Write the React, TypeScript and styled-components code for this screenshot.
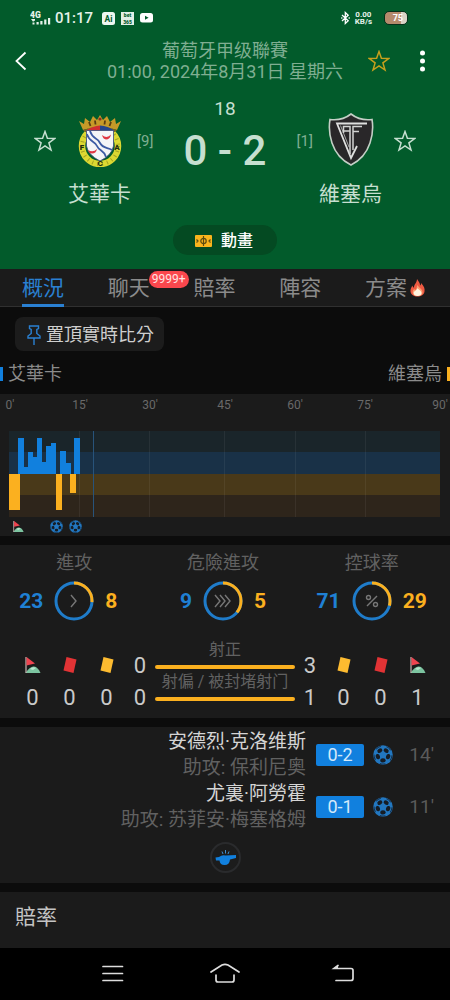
import React from "react";
import styled, { createGlobalStyle } from "styled-components";

const c = {
  green: "#025b2b",
  panel: "#1b1b1b",
  page: "#0c0c0c",
  blue: "#1180de",
  amber: "#fbb01f",
  pale: "#c6dfd0",
  muted: "#7fae91",
  grey: "#616161",
};

const Global = createGlobalStyle`
  *, *::before, *::after { box-sizing: border-box; }
  body {
    margin: 0;
    background: ${c.page};
    font-family: Roboto, "Noto Sans CJK TC", sans-serif;
  }
  button { border: 0; padding: 0; margin: 0; background: none; color: inherit; font: inherit; cursor: pointer; }
  svg { display: block; flex: none; }
  h1, h2, p { margin: 0; font-weight: 400; }
`;

const Page = styled.div`
  min-height: 100vh;
  display: flex;
  flex-direction: column;
`;

/* ---------- header ---------- */
const Hero = styled.header`
  background: ${c.green};
  padding-bottom: 14px;
`;
const StatusBar = styled.div`
  display: flex;
  align-items: center;
  justify-content: space-between;
  height: 34px;
  padding: 2px 42px 0 30px;
  color: #e6f2ea;
`;
const StatusGroup = styled.div<{ $gap: number }>`
  display: flex;
  align-items: center;
  gap: ${(p) => p.$gap}px;
`;
const Clock = styled.span`
  font-size: 15px;
  line-height: 18px;
  font-weight: 500;
  margin-right: 3px;
`;
const Speed = styled.span`
  font-size: 8px;
  line-height: 7px;
  font-weight: 700;
  text-align: center;
  margin-right: 7px;
`;
const Battery = styled.span`
  width: 24px;
  height: 14px;
  border: 1px solid #06301a;
  border-radius: 5px;
  background: linear-gradient(90deg, #b58a6c 0 70%, #d9d3c6 75%);
  color: #fff;
  font-size: 9px;
  line-height: 12px;
  font-weight: 700;
  text-align: right;
  padding-right: 4px;
`;
const TitleBar = styled.div`
  display: grid;
  grid-template-columns: 1fr auto 1fr;
  align-items: center;
  padding: 6px 15px 0;
`;
const Title = styled.h1`
  font-size: 18px;
  line-height: 21px;
  text-align: center;
  color: ${c.muted};
`;
const TitleActions = styled.div`
  display: flex;
  justify-content: flex-end;
  align-items: center;
  gap: 26px;
`;
const IconButton = styled.button`
  display: flex;
  align-items: center;
`;
const Match = styled.section`
  display: flex;
  margin-top: 16px;
  padding: 0 34px;
`;
const Side = styled.div<{ $away?: boolean }>`
  display: flex;
  flex-direction: ${(p) => (p.$away ? "row-reverse" : "row")};
  align-items: flex-start;
  padding-top: 15px;
`;
const FollowButton = styled(IconButton)`
  height: 56px;
`;
const Team = styled.div`
  display: flex;
  flex-direction: column;
  align-items: center;
  margin: 0 6px 0 12px;
  ${Side}:last-child & { margin: 0 12px 0 6px; }
`;
const TeamName = styled.h2`
  font-size: 21px;
  line-height: 28px;
  margin-top: 13px;
  color: ${c.pale};
  white-space: nowrap;
`;
const Rank = styled.span`
  font-size: 15px;
  line-height: 56px;
  color: ${c.muted};
`;
const Score = styled.div`
  flex: 1;
  text-align: center;
  color: ${c.pale};
`;
const Minute = styled.div`
  font-size: 19px;
  line-height: 21px;
`;
const Goals = styled.div`
  font-size: 42px;
  line-height: 50px;
  font-weight: 500;
  margin-top: 7px;
  white-space: nowrap;
`;
const AnimationButton = styled.button`
  display: flex;
  align-items: center;
  gap: 9px;
  height: 30px;
  margin: 17px auto 0;
  padding: 2px 24px 0 22px;
  border-radius: 15px;
  background: #044a22;
  color: #fff;
  font-size: 16px;
  line-height: 28px;
  font-weight: 500;
`;

/* ---------- tabs ---------- */
const Tabs = styled.nav`
  display: flex;
  justify-content: space-between;
  height: 38px;
  padding: 0 25px 0 22px;
  background: ${c.panel};
  border-bottom: 1px solid #303030;
`;
const Tab = styled.button<{ $active?: boolean }>`
  position: relative;
  display: flex;
  align-items: center;
  gap: 3px;
  height: 38px;
  padding-top: 3px;
  font-size: 21px;
  line-height: 32px;
  white-space: nowrap;
  color: ${(p) => (p.$active ? "#2a80d2" : "#8b8b8b")};
  border-bottom: 3px solid ${(p) => (p.$active ? "#2a80d2" : "transparent")};
`;
const Count = styled.span`
  position: absolute;
  left: 41px;
  top: 2px;
  padding: 0 3px;
  border-radius: 9px;
  background: #fa474d;
  color: #ffe3e3;
  font-size: 12px;
  line-height: 17px;
`;

/* ---------- body ---------- */
const Body = styled.main`
  flex: 1;
  display: flex;
  flex-direction: column;
`;
const PinButton = styled.button`
  display: flex;
  align-items: center;
  align-self: flex-start;
  gap: 5px;
  height: 34px;
  margin: 10px 0 0 15px;
  padding: 2px 10px 0 12px;
  border-radius: 8px;
  background: #1c1c1c;
  color: #cfcfcf;
  font-size: 18px;
  line-height: 32px;
`;
const Legend = styled.div`
  display: flex;
  justify-content: space-between;
  margin: 12px 0 9px;
`;
const LegendItem = styled.div<{ $away?: boolean }>`
  display: flex;
  align-items: center;
  flex-direction: ${(p) => (p.$away ? "row-reverse" : "row")};
  gap: 5px;
  font-size: 18px;
  line-height: 22px;
  color: #8b8b8b;
  &::before {
    content: "";
    width: 3px;
    height: 14px;
    background: ${(p) => (p.$away ? c.amber : c.blue)};
  }
`;
const Panel = styled.section`
  background: ${c.panel};
  margin-bottom: 9px;
`;
const ChartPanel = styled(Panel)`
  padding: 3px 10px 2px 9px;
`;
const Axis = styled.div`
  display: grid;
  grid-template-columns: 70fr 70fr 75fr 70fr 70fr 75fr 0;
  margin-bottom: 18px;
  padding-left: 1px;
`;
const Tick = styled.span`
  display: flex;
  justify-content: center;
  width: 0;
  font-size: 12px;
  line-height: 16px;
  color: #696969;
`;
const Markers = styled.div`
  display: flex;
  align-items: center;
  height: 16px;
  margin-top: 1px;
  padding-left: 4px;
`;
const MarkerGroup = styled.div`
  display: flex;
  gap: 6px;
  margin-left: 26px;
`;

/* ---------- stats ---------- */
const StatsPanel = styled(Panel)`
  padding: 7px 0 5px;
`;
const Rings = styled.div`
  display: grid;
  grid-template-columns: repeat(3, 1fr);
  padding-right: 4px;
`;
const RingLabel = styled.div`
  font-size: 18px;
  line-height: 22px;
  text-align: center;
  color: ${c.grey};
`;
const RingRow = styled.div`
  display: grid;
  grid-template-columns: 1fr 40px 1fr;
  align-items: center;
  gap: 11px;
  margin-top: 7px;
  font-size: 21px;
  line-height: 24px;
  font-weight: 700;
`;
const Value = styled.span<{ $away?: boolean }>`
  text-align: ${(p) => (p.$away ? "left" : "right")};
  color: ${(p) => (p.$away ? c.amber : "#1f80d4")};
`;
const Counts = styled.div`
  display: grid;
  grid-template-columns: auto 1fr auto;
  margin-top: 19px;
  padding: 0 14px;
`;
const CountGrid = styled.div<{ $away?: boolean }>`
  display: grid;
  grid-template-columns: ${(p) => (p.$away ? "30px 37px 37px 37px" : "37px 37px 37px 30px")};
  grid-auto-rows: 32px;
  place-items: center;
  margin-top: 9px;
  font-size: 22px;
  color: #cacaca;
`;
const Shots = styled.div`
  display: flex;
  flex-direction: column;
  gap: 3px;
`;
const ShotLabel = styled.div`
  font-size: 16px;
  line-height: 20px;
  text-align: center;
  white-space: nowrap;
  color: ${c.grey};
`;
const ShotBar = styled.div`
  height: 4px;
  margin-top: 5px;
  border-radius: 2px;
  background: ${c.amber};
`;

/* ---------- events ---------- */
const EventPanel = styled(Panel)`
  padding: 2px 16px;
`;
const EventRow = styled.div`
  display: flex;
  justify-content: flex-end;
  align-items: center;
  height: 52px;
`;
const Names = styled.div`
  font-size: 19px;
  line-height: 26px;
  text-align: right;
  color: ${c.grey};
`;
const Scorer = styled.p`
  color: #d4d4d4;
`;
const ScoreTag = styled.span`
  width: 48px;
  margin: 0 9px 0 10px;
  border-radius: 2px;
  background: ${c.blue};
  color: #d3e9fa;
  font-size: 18px;
  line-height: 22px;
  text-align: center;
`;
const EventMinute = styled.span`
  width: 41px;
  font-size: 19px;
  line-height: 22px;
  text-align: right;
  color: #5a5a5a;
`;
const Kickoff = styled.div`
  display: flex;
  justify-content: center;
  padding: 9px 0 8px;
`;
const OddsPanel = styled.section`
  flex: 1;
  min-height: 56px;
  background: ${c.panel};
  padding: 11px 15px;
`;
const OddsTitle = styled.h2`
  font-size: 21px;
  line-height: 28px;
  color: #c4c4c4;
`;
const SystemNav = styled.nav`
  display: grid;
  grid-template-columns: repeat(3, 1fr);
  justify-items: center;
  align-items: center;
  height: 52px;
  padding: 0 52px;
  background: #000;
`;

/* ---------- drawings ---------- */
const StarIcon = ({ color }: { color: string }) => (
  <svg width="22" height="22" viewBox="0 0 22 22" fill="none" stroke={color} strokeWidth="1.5">
    <path d="M11 1.6 13.4 8.3 20.7 8.5 14.9 12.9 17 20 11 15.8 5 20 7.1 12.9 1.3 8.5 8.6 8.3Z" />
  </svg>
);

const SignalIcon = () => (
  <svg width="21" height="15" viewBox="0 0 21 15" fill="#e6f2ea">
    <text x="0" y="6.5" fontSize="8.5" fontWeight="900" fontFamily="Roboto">4G</text>
    <path d="M1 8h4v1.5l-2 1.200zM2.500 11.500h2V13.500H2.500zM6.500 11h2.200v2.500H6.500zM10.300 10h2.200v3.500h-2.200zM14.200 8.500h2.200V13.500h-2.200zM18 7h2.200v6.500h-2.200z" />
  </svg>
);

const AiIcon = () => (
  <svg width="13" height="13" viewBox="0 0 13 13">
    <rect width="13" height="13" rx="2.5" fill="#eef6f0" />
    <text x="6.5" y="9.6" fontSize="8.5" fontWeight="700" fontFamily="Roboto" textAnchor="middle" fill={c.green}>Ai</text>
  </svg>
);

const BetIcon = () => (
  <svg width="13" height="13" viewBox="0 0 13 13" fontSize="5" fontWeight="900" fontFamily="Roboto" textAnchor="middle">
    <rect width="13" height="13" fill="#e2efe6" />
    <text x="6.5" y="5.200" fill={c.green}>bet</text>
    <text x="6.5" y="11.700" fill={c.green}>365</text>
  </svg>
);

const VideoIcon = () => (
  <svg width="13" height="10" viewBox="0 0 13 10">
    <rect width="13" height="9.5" rx="2.5" fill="#fff" />
    <path d="M5 2.8 8.6 4.8 5 6.8Z" fill={c.green} />
  </svg>
);

const BluetoothIcon = () => (
  <svg width="9" height="14" viewBox="0 0 9 14" fill="none" stroke="#fff" strokeWidth="1.3">
    <path d="M1 4 7.2 9.8 4.3 12.5V1.5L7.2 4.2 1 10M.2 7h1.2M7.6 7h1.2" />
  </svg>
);

const HomeCrest = () => (
  <svg width="44" height="54" viewBox="0 0 44 54">
    <circle cx="22" cy="33" r="18" fill="none" stroke="#dcd832" strokeWidth="6.500" />
    <circle cx="22" cy="33" r="18" fill="none" stroke="#a5a322" strokeWidth="4" strokeDasharray="1 4" />
    <path d="M5 17 1 8l5 3 1-6 5 4 3-6 4 4 3-5 3 5 4-4 3 6 5-4 1 6 5-3-4 9Q22 11 5 17Z" fill="#c79a28" />
    <path d="M11 9l1.500 4M17 7.500l.5 4M27 7.500l-.5 4M33 9l-1.500 4" stroke="#5b3d11" strokeWidth="1.800" />
    <circle cx="22" cy="6" r="1.600" fill="#8a3021" />
    <path d="M5 17Q22 10 39 17L37 19H7Z" fill="#7c6620" />
    <path d="M8 17.500Q15 13 22 12.500V18H8Z" fill="#d02d31" />
    <path d="M22 12.500Q30 13 36 17.500V18H22Z" fill="#26458c" />
    <path d="M8.500 17.500H35.500V33Q34 42 22 48 10 42 8.500 33Z" fill="#f4f5f7" stroke="#3a4a79" strokeWidth=".8" />
    <path d="M12 18C15 27 19 24 22 30S30 34 34 37M8.800 21C12 30 17 28 19 33S26 37 28 44" fill="none" stroke="#3d5ba4" strokeWidth="1.800" />
    <path d="M24 22q5 4 9-.5-1 5-5 5-3-.5-4-4.500ZM10 37q5 3 9-1-1 4.500-5 4.500-3 0-4-3.500Z" fill="#df3743" />
    <g fontFamily="Roboto" fontWeight="900" fontSize="8" fill="#222d10" textAnchor="middle">
      <text x="4" y="37">F</text>
      <text x="39" y="37">A</text>
      <text x="22" y="53">C</text>
    </g>
  </svg>
);

const AwayCrest = () => (
  <svg width="46" height="54" viewBox="0 0 46 54">
    <path d="M23 1Q32 8 44 6.500 46 18 42 30 37 45 23 52 9 45 4 30 0 18 2 6.500 14 8 23 1Z" fill="#292729" stroke="#c4cfc6" strokeWidth="1.6" />
    <path d="M39 10.500H9L23 45 29 33" fill="none" stroke="#dfe0df" strokeWidth="1.8" />
    <path d="M12.500 12.500 21 34" stroke="#a4a5a4" strokeWidth="1" />
    <path d="M15.500 20V13.500H22V41M15.500 18H22M25 37V13.500H34M25 18.500H31" fill="none" stroke="#d2d3d2" strokeWidth="1.5" />
  </svg>
);

const PitchIcon = () => (
  <svg width="17" height="12" viewBox="0 0 17 12">
    <rect width="17" height="12" rx="1" fill="#fbb41d" />
    <g fill="none" stroke="#5b4a10" strokeWidth="1.2">
      <path d="M8.500 1V11" />
      <circle cx="8.500" cy="6" r="2.700" />
      <path d="M1.500 4.500 3 6 1.500 7.500M15.500 4.500 14 6 15.500 7.500" />
    </g>
  </svg>
);

const FlameIcon = () => (
  <svg width="15" height="18" viewBox="0 0 15 18">
    <path d="M7 0C9 3 10 4 10 6.500 11 6 11 5 11 4 14 7 15 9.500 14.500 12.500 14 16 11 17.500 7.500 17.500S1 16 .5 12.500C.2 10 1.500 8 2.500 6.500 2.700 8 3.200 8.500 4 8.500 4 5 7 4 7 0Z" fill="#ee5a42" />
    <path d="M7.500 6C9 9 12.500 10 12.500 13.200 12.500 16 10 17 7.500 17S2.700 16 2.700 13.200C2.700 11.500 3.500 10.500 4.200 10 5 11 5.600 11 6 10.500 6.800 9.500 6.500 8 7.500 6Z" fill="#fba173" />
    <path d="M7.500 9C8.500 11 11.500 11.500 11.500 14 11.500 16.300 9.500 17 7.500 17S3.700 16.300 3.700 14C3.700 12 6.500 12 7.500 9Z" fill="#fff3df" />
  </svg>
);

const PinIcon = () => (
  <svg width="14" height="20" viewBox="0 0 14 20" fill="none" stroke="#2a80d2" strokeWidth="1.400">
    <path d="M2.500 1H11.500V3.500L9.800 4.500V8.500L13 11V13H1V11L4.200 8.500V4.500L2.500 3.500ZM7 13V20" />
  </svg>
);

const ballPatches = [-54, 18, 90, 162, 234];
const BallIcon = ({ size }: { size: number }) => (
  <svg width={size} height={size} viewBox="0 0 20 20">
    <circle cx="10" cy="10" r="9.800" fill="#2277c0" />
    <circle cx="10" cy="10" r="9" fill="none" stroke="#16304a" strokeWidth="1" strokeDasharray="5.655 5.655" transform="rotate(2 10 10)" />
    {ballPatches.map((a) => (
      <ellipse key={a} cx="15.400" cy="10" rx="2.100" ry="2.700" fill="#161d25" transform={`rotate(${a} 10 10)`} />
    ))}
  </svg>
);

const CornerIcon = ({ size }: { size: number }) => (
  <svg width={size} height={size} viewBox="0 0 16 16">
    <path d="M.500 16Q5 9 9 9.500 13 10 15.500 16Z" fill="#7cc4a0" />
    <path d="M5 12Q8 9 11 11L8 13Z" fill="#b9e6cf" />
    <path d="M1 0V16" stroke="#c9b7b4" strokeWidth="1.200" />
    <path d="M1.500 0 10 6.500 1.500 8.500Z" fill="#ef4450" />
  </svg>
);

const CardIcon = ({ color }: { color: string }) => (
  <svg width="14" height="16" viewBox="0 0 14 16">
    <path d="M3.500 0 13.500 2.500 10.500 16 .5 13.500Z" fill={color} />
  </svg>
);

const WhistleIcon = () => (
  <svg width="31" height="31" viewBox="0 0 31 31">
    <circle cx="15.500" cy="15.500" r="14.500" fill="#1c1c1c" stroke="#2a2b2d" strokeWidth="2" />
    <path d="M12 9.500 13 12M15.500 8V11.500M19 9.500 18 12" stroke="#3f8fd2" strokeWidth="1" />
    <path d="M5.500 15.500 9 15Q12 12.500 15.500 13.500L26 13V16L20 17.500Q19.500 23 14.500 23 10 23 9.500 18.500L6 18.500Z" fill={c.blue} />
  </svg>
);

type Glyph = "one" | "three" | "percent";
const glyphs: Record<Glyph, React.ReactNode> = {
  one: <path d="M17 14 22 20 17 26" />,
  three: <path d="M12 14 17 20 12 26M17 14 22 20 17 26M22 14 27 20 22 26" />,
  percent: (
    <>
      <path d="M25 15 15 25" />
      <circle cx="16.500" cy="16.500" r="2" />
      <circle cx="23.500" cy="23.500" r="2" />
    </>
  ),
};

const Ring = ({ home, away, glyph }: { home: number; away: number; glyph: Glyph }) => {
  const round = 2 * Math.PI * 18;
  const part = (round * away) / (home + away);
  return (
    <svg width="40" height="40" viewBox="0 0 40 40" fill="none">
      <circle cx="20" cy="20" r="18" stroke="#1f7cca" strokeWidth="3" />
      <circle cx="20" cy="20" r="18" stroke={c.amber} strokeWidth="3" strokeDasharray={`${part} ${round}`} transform="rotate(-90 20 20)" />
      <g stroke="#777" strokeWidth="1.400">{glyphs[glyph]}</g>
    </svg>
  );
};

// Pressure bars: start, width and height, measured from the centre line.
const homeBars = [
  [27, 17, 107], [44, 12, 20], [56, 17, 64], [73, 10, 49], [83, 17, 107], [100, 11, 35],
  [111, 15, 82], [126, 16, 92], [153, 19, 67], [172, 14, 31], [196, 17, 107],
];
const awayBars = [[0, 32, 109], [140, 18, 109], [182, 18, 58]];

const PressureChart = () => (
  <svg width="100%" height="86" viewBox="0 0 1293 258" preserveAspectRatio="none" shapeRendering="crispEdges">
    <rect width="1293" height="64" fill="#1a252a" />
    <rect y="64" width="1293" height="64" fill="#193147" />
    <rect y="128" width="1293" height="65" fill="#493919" />
    <rect y="193" width="1293" height="65" fill="#2e251b" />
    {[210, 420, 646, 858, 1068].map((x) => (
      <rect key={x} x={x} width="3" height="258" fill="#fff" opacity=".06" />
    ))}
    <rect x="252" width="3" height="258" fill="#28537a" />
    {homeBars.map(([x, w, h]) => (
      <rect key={x} x={x} y={128 - h} width={w} height={h} fill={c.blue} />
    ))}
    {awayBars.map(([x, w, h]) => (
      <rect key={x} x={x} y="128" width={w} height={h} fill={c.amber} />
    ))}
  </svg>
);

/* ---------- data ---------- */
const rings: { label: string; home: number; away: number; glyph: Glyph }[] = [
  { label: "進攻", home: 23, away: 8, glyph: "one" },
  { label: "危險進攻", home: 9, away: 5, glyph: "three" },
  { label: "控球率", home: 71, away: 29, glyph: "percent" },
];
const events = [
  { scorer: "安德烈·克洛维斯", assist: "保利尼奥", score: "0-2", minute: "14'" },
  { scorer: "尤裏·阿勞霍", assist: "苏菲安·梅塞格姆", score: "0-1", minute: "11'" },
];
const red = "#e23335";
const yellow = "#fdbb30";

export default function App() {
  return (
    <>
      <Global />
      <Page>
        <Hero>
          <StatusBar>
            <StatusGroup $gap={6}>
              <StatusGroup $gap={4}>
                <SignalIcon />
                <Clock>01:17</Clock>
              </StatusGroup>
              <AiIcon />
              <BetIcon />
              <VideoIcon />
            </StatusGroup>
            <StatusGroup $gap={5}>
              <BluetoothIcon />
              <Speed>0.00<br />KB/s</Speed>
              <Battery>75</Battery>
            </StatusGroup>
          </StatusBar>
          <TitleBar>
            <IconButton aria-label="返回">
              <svg width="12" height="20" viewBox="0 0 12 20" fill="none" stroke="#fff" strokeWidth="1.800">
                <path d="M10.500 1.500 1.500 10 10.500 18.500" />
              </svg>
            </IconButton>
            <Title>葡萄牙甲级聯賽<br />01:00, 2024年8月31日 星期六</Title>
            <TitleActions>
              <IconButton aria-label="收藏"><StarIcon color="#c7a01c" /></IconButton>
              <IconButton aria-label="更多">
                <svg width="19" height="22" viewBox="0 0 19 22" fill="#fff">
                  <circle cx="6.500" cy="3" r="2.500" />
                  <circle cx="6.500" cy="11" r="2.500" />
                  <circle cx="6.500" cy="19" r="2.500" />
                </svg>
              </IconButton>
            </TitleActions>
          </TitleBar>
          <Match>
            <Side>
              <FollowButton aria-label="關注艾華卡"><StarIcon color={c.pale} /></FollowButton>
              <Team><HomeCrest /><TeamName>艾華卡</TeamName></Team>
              <Rank>[9]</Rank>
            </Side>
            <Score>
              <Minute>18</Minute>
              <Goals>0 - 2</Goals>
            </Score>
            <Side $away>
              <FollowButton aria-label="關注維塞烏"><StarIcon color={c.pale} /></FollowButton>
              <Team><AwayCrest /><TeamName>維塞烏</TeamName></Team>
              <Rank>[1]</Rank>
            </Side>
          </Match>
          <AnimationButton><PitchIcon />動畫</AnimationButton>
        </Hero>

        <Tabs>
          <Tab $active>概況</Tab>
          <Tab>聊天<Count>9999+</Count></Tab>
          <Tab>賠率</Tab>
          <Tab>陣容</Tab>
          <Tab>方案<FlameIcon /></Tab>
        </Tabs>

        <Body>
          <PinButton><PinIcon />置頂實時比分</PinButton>
          <Legend>
            <LegendItem>艾華卡</LegendItem>
            <LegendItem $away>維塞烏</LegendItem>
          </Legend>

          <ChartPanel>
            <Axis>
              {[0, 15, 30, 45, 60, 75, 90].map((m) => <Tick key={m}>{m}'</Tick>)}
            </Axis>
            <PressureChart />
            <Markers>
              <CornerIcon size={11} />
              <MarkerGroup><BallIcon size={13} /><BallIcon size={13} /></MarkerGroup>
            </Markers>
          </ChartPanel>

          <StatsPanel>
            <Rings>
              {rings.map((r) => (
                <div key={r.label}>
                  <RingLabel>{r.label}</RingLabel>
                  <RingRow>
                    <Value>{r.home}</Value>
                    <Ring home={r.home} away={r.away} glyph={r.glyph} />
                    <Value $away>{r.away}</Value>
                  </RingRow>
                </div>
              ))}
            </Rings>
            <Counts>
              <CountGrid>
                <CornerIcon size={16} /><CardIcon color={red} /><CardIcon color={yellow} /><span>0</span>
                <span>0</span><span>0</span><span>0</span><span>0</span>
              </CountGrid>
              <Shots>
                <div><ShotLabel>射正</ShotLabel><ShotBar /></div>
                <div><ShotLabel>射偏 / 被封堵射门</ShotLabel><ShotBar /></div>
              </Shots>
              <CountGrid $away>
                <span>3</span><CardIcon color={yellow} /><CardIcon color={red} /><CornerIcon size={16} />
                <span>1</span><span>0</span><span>0</span><span>1</span>
              </CountGrid>
            </Counts>
          </StatsPanel>

          <EventPanel>
            {events.map((e) => (
              <EventRow key={e.minute}>
                <Names>
                  <Scorer>{e.scorer}</Scorer>
                  <p>助攻: {e.assist}</p>
                </Names>
                <ScoreTag>{e.score}</ScoreTag>
                <BallIcon size={20} />
                <EventMinute>{e.minute}</EventMinute>
              </EventRow>
            ))}
            <Kickoff><WhistleIcon /></Kickoff>
          </EventPanel>

          <OddsPanel>
            <OddsTitle>賠率</OddsTitle>
          </OddsPanel>
        </Body>

        <SystemNav>
          <IconButton aria-label="選單">
            <svg width="32" height="22" viewBox="0 0 32 22" stroke="#ddd" strokeWidth="1.700" strokeLinecap="round">
              <path d="M9 3.500H28.500M9 10.500H28.500M9 17.500H28.500" />
            </svg>
          </IconButton>
          <IconButton aria-label="主頁">
            <svg width="32" height="22" viewBox="0 0 32 22" fill="none" stroke="#ddd" strokeWidth="1.700" strokeLinecap="round">
              <path d="M2 9 13 2Q16 .600 19 2L30 9M7 12V17Q7 19 9 19H23Q25 19 25 17V12" />
            </svg>
          </IconButton>
          <IconButton aria-label="後退">
            <svg width="32" height="22" viewBox="0 0 32 22" fill="none" stroke="#ddd" strokeWidth="1.700" strokeLinecap="round">
              <path d="M14 2.500 10 5.500H27Q29 5.500 29 7.500V15.500Q29 17.500 27 17.500H12" />
              <path d="M9 5.800 14 2V5.800Z" fill="#ddd" stroke="none" />
            </svg>
          </IconButton>
        </SystemNav>
      </Page>
    </>
  );
}
